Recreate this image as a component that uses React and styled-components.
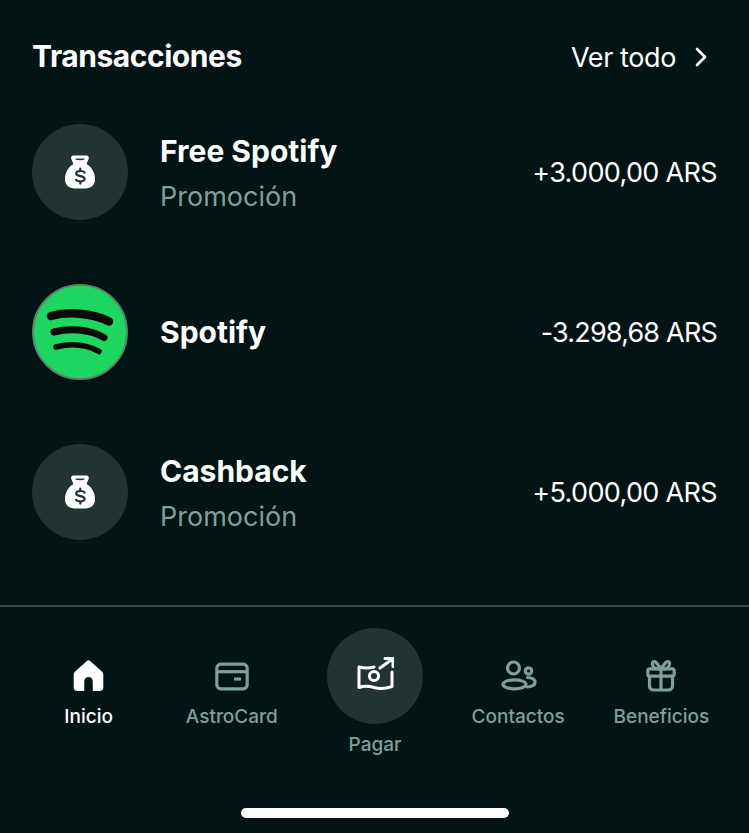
import styled, { createGlobalStyle } from "styled-components";
import { ChevronRight } from "lucide-react";

const GlobalStyle = createGlobalStyle`
  html, body {
    margin: 0;
    padding: 0;
    background: #021414;
  }
`;

const Screen = styled.div`
  display: flex;
  flex-direction: column;
  box-sizing: border-box;
  width: 749px;
  height: 833px;
  overflow: hidden;
  background: #021414;
  color: #fff;
  font-family: "Inter", "Liberation Sans", sans-serif;
`;

const Content = styled.section`
  display: flex;
  flex-direction: column;
  padding: 40px 32px 65px;
`;

const Header = styled.div`
  display: flex;
  justify-content: space-between;
  align-items: center;
  height: 34px;
  margin-bottom: 50px;
`;

const Title = styled.h2`
  margin: 0;
  padding-bottom: 2px;
  font-size: 30px;
  font-weight: 700;
  letter-spacing: -0.45px;
`;

const More = styled.a`
  display: flex;
  align-items: center;
  gap: 9px;
  font-size: 27px;
  font-weight: 400;
  letter-spacing: -0.4px;
`;

const List = styled.div`
  display: flex;
  flex-direction: column;
  gap: 64px;
`;

const Row = styled.div`
  display: flex;
  align-items: center;
  height: 96px;
`;

const Circle = styled.div`
  display: flex;
  align-items: center;
  justify-content: center;
  flex: none;
  width: 96px;
  height: 96px;
  border-radius: 50%;
  background: #223333;
`;

const Info = styled.div`
  display: flex;
  flex-direction: column;
  margin-left: 32px;
  flex: 1;
`;

const Name = styled.div`
  font-size: 30px;
  line-height: 38px;
  font-weight: 700;
`;

const Kind = styled.div`
  margin-top: 9px;
  margin-bottom: -3px;
  font-size: 27px;
  line-height: 36px;
  color: #7fa098;
`;

const Amount = styled.div`
  font-size: 27px;
  letter-spacing: ${(p) => (p.$minus ? "-0.8px" : "-0.65px")};
`;

const Divider = styled.hr`
  width: 100%;
  height: 2px;
  margin: 0;
  border: 0;
  background: #3c4c4c;
`;

const Nav = styled.nav`
  display: grid;
  grid-template-columns: repeat(5, 1fr);
  padding: 21px 16px 0 17px;
`;

const NavItem = styled.div`
  display: flex;
  flex-direction: column;
  align-items: center;
  padding-top: ${(p) => (p.$raised ? "0" : "24px")};
  gap: ${(p) => (p.$raised ? "9px" : "5px")};
  color: ${(p) => (p.$active ? "#fff" : "#7fa098")};
`;

const NavIcon = styled.div`
  display: flex;
  align-items: center;
  justify-content: center;
  width: 48px;
  height: 48px;
`;

const NavLabel = styled.span`
  font-size: 19px;
  line-height: 24px;
  font-weight: 500;
  white-space: nowrap;
`;

const HomeBar = styled.div`
  align-self: center;
  width: 268px;
  height: 10px;
  margin-top: auto;
  margin-bottom: 15px;
  border-radius: 5px;
  background: #fff;
`;

const PayCircle = styled(Circle)`
  color: #fff;
`;

const SpotifyBadge = styled(Circle)`
  box-sizing: border-box;
  background: #1ed760;
  border: 2px solid #5b8268;
`;

const MoneyBag = () => (
  <svg width="30" height="34" viewBox="0 0 30 34">
    <path
      fill="#fff"
      fillRule="evenodd"
      d="M9 .5h12c2.500 0 3.500 2 2.500 4l-2 4.500C27 12 30 18 30 24c0 6-4 9.500-10 9.500H10C4 33.500 0 30 0 24 0 18 3 12 8.500 9l-2-4.500C5.500 2.500 6.500.5 9 .5zM11 3.600c-.900 0-1 .800-.300 1 2.800.800 5.800.800 8.600 0 .700-.200.600-1-.300-1z"
    />
    <path
      fill="none"
      stroke="#223333"
      strokeWidth="2.200"
      strokeLinecap="round"
      d="M19.500 17.500c-.500-.900-2-1.500-4.200-1.500-2.500 0-4.200.900-4.200 2.600 0 3.500 8.500 1.700 8.500 5.100 0 1.700-1.700 2.600-4.300 2.600-2.200 0-3.700-.600-4.200-1.500M15.300 13.500v2.300M15.300 26.300v2.300"
    />
  </svg>
);

const SpotifyBars = () => (
  <svg width="70" height="48" viewBox="0 0 70 48" fill="none" stroke="#0a0a0a" strokeLinecap="round">
    <path strokeWidth="8.500" d="M6 8C22 3.500 47 4.500 64 13.500" />
    <path strokeWidth="7" d="M9 24C24 20 44 21 59 29.500" />
    <path strokeWidth="5.500" d="M11 39C25 35.500 41 36.500 54 43.500" />
  </svg>
);

const HomeIcon = () => (
  <svg width="31" height="33" viewBox="0 0 32 34">
    <path
      fill="currentColor"
      d="M14 1.200a3 3 0 0 1 4 0l11.500 10.300c1.200 1.100 1.800 2.400 1.800 4V28c0 2.500-1.500 4-4 4h-6.900V22a4.400 4.400 0 0 0-8.800 0v10H4.700c-2.500 0-4-1.500-4-4V15.500c0-1.600.600-2.900 1.800-4z"
    />
  </svg>
);

const CardIcon = () => (
  <svg width="36" height="30" viewBox="0 0 36 30" fill="none" stroke="currentColor" strokeWidth="3.200">
    <rect x="2.800" y="3.200" width="30.400" height="24.600" rx="4" />
    <path d="M2.800 10.700h30.400" />
    <path d="M20 18h7" />
  </svg>
);

const PayIcon = () => (
  <svg width="38" height="40" viewBox="0 0 38 40" fill="none" stroke="currentColor" strokeWidth="3" strokeLinecap="round" strokeLinejoin="round">
    <path d="M18 11c-5 1.500-9 1.500-15 0v20.500c6-2 10-1.500 15 0s11 1.500 18-1V16" />
    <circle cx="18" cy="20" r="4.600" />
    <path d="M24 12L36.500 3M29 2.500h8v8" />
  </svg>
);

const PeopleIcon = () => (
  <svg width="38" height="32" viewBox="0 0 38 32" fill="none" stroke="currentColor" strokeWidth="3.200" strokeLinecap="round">
    <circle cx="14.500" cy="8" r="6" />
    <ellipse cx="15.500" cy="24.300" rx="11.500" ry="4.500" />
    <circle cx="29.500" cy="11" r="3.200" />
    <path d="M28.500 17.500c4.500 0 7.500 2 7.500 4.500s-3 4.500-7.500 5" />
  </svg>
);

const GiftIcon = () => (
  <svg width="32" height="34" viewBox="0 0 32 34" fill="none" stroke="currentColor" strokeWidth="3.200" strokeLinejoin="round">
    <rect x="2.800" y="9.800" width="26.400" height="7.400" rx="2" />
    <path d="M4.500 17v10a4 4 0 0 0 4 4h15a4 4 0 0 0 4-4V17M16 9.800V31" />
    <path d="M16 9.800l-5-6.500c-1.500-1.500-4-.5-3.500 2 .3 2 2 4.500 4 4.500zM16 9.800l5-6.500c1.500-1.500 4-.5 3.500 2-.3 2-2 4.500-4 4.500z" />
  </svg>
);

const transactions = [
  { name: "Free Spotify", kind: "Promoción", amount: "+3.000,00 ARS" },
  { name: "Spotify", amount: "-3.298,68 ARS", spotify: true },
  { name: "Cashback", kind: "Promoción", amount: "+5.000,00 ARS" },
];

const navItems = [
  { label: "Inicio", icon: <HomeIcon />, active: true },
  { label: "AstroCard", icon: <CardIcon /> },
  { label: "Pagar", icon: <PayIcon />, raised: true },
  { label: "Contactos", icon: <PeopleIcon /> },
  { label: "Beneficios", icon: <GiftIcon /> },
];

export default function App() {
  return (
    <Screen>
      <GlobalStyle />
      <Content>
        <Header>
          <Title>Transacciones</Title>
          <More>
            Ver todo
            <ChevronRight size={32} strokeWidth={2} />
          </More>
        </Header>
        <List>
          {transactions.map(({ name, kind, amount, spotify }) => (
            <Row key={name}>
              {spotify ? (
                <SpotifyBadge>
                  <SpotifyBars />
                </SpotifyBadge>
              ) : (
                <Circle>
                  <MoneyBag />
                </Circle>
              )}
              <Info>
                <Name>{name}</Name>
                {kind && <Kind>{kind}</Kind>}
              </Info>
              <Amount $minus={spotify}>{amount}</Amount>
            </Row>
          ))}
        </List>
      </Content>
      <Divider />
      <Nav>
        {navItems.map(({ label, icon, active, raised }) => (
          <NavItem key={label} $active={active} $raised={raised}>
            {raised ? <PayCircle>{icon}</PayCircle> : <NavIcon>{icon}</NavIcon>}
            <NavLabel>{label}</NavLabel>
          </NavItem>
        ))}
      </Nav>
      <HomeBar />
    </Screen>
  );
}
